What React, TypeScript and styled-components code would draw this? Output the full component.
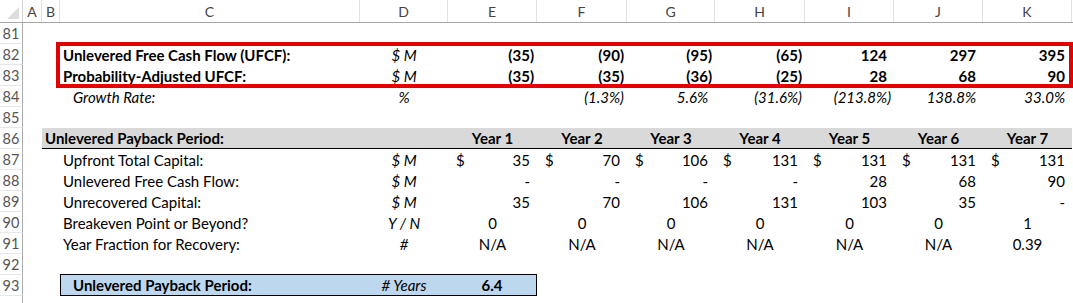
import React from 'react';
import styled, { createGlobalStyle } from 'styled-components';

const GlobalStyle = createGlobalStyle`
  html, body {
    margin: 0;
    padding: 0;
    background: #ffffff;
    overflow: hidden;
  }
  body {
    font-family: Lato, "Open Sans", sans-serif;
    font-size: 15px;
    color: #000;
  }
`;

// widths of the row header + columns A..K
const COLS = '23px 19px 18px 300px 88px 89px 90px 88px 90px 89px 89px 89px';
const BAND_COLS = '18px 300px 88px 89px 90px 88px 90px 89px 89px 89px';
const LETTERS = ['A', 'B', 'C', 'D', 'E', 'F', 'G', 'H', 'I', 'J', 'K'];
const YEARS = [1, 2, 3, 4, 5, 6, 7];

const Sheet = styled.div`
  width: 1073px;
  height: 303px;
  overflow: hidden;
`;

const HeaderRow = styled.div`
  display: grid;
  grid-template-columns: ${COLS};
  height: 22px;
  border-bottom: 1px solid #a6a6a6;
`;

const Corner = styled.div`
  position: relative;
  border-right: 1px solid #d4d4d4;
  &:after {
    content: '';
    position: absolute;
    right: 3px;
    bottom: 3px;
    border-style: solid;
    border-width: 0 0 12px 12px;
    border-color: transparent transparent #dcdcdc transparent;
  }
`;

const ColHead = styled.div`
  display: flex;
  align-items: center;
  justify-content: center;
  color: #444;
  font-size: 14px;
  border-right: 1px solid #e1e1e1;
`;

const Row = styled.div`
  display: grid;
  grid-template-columns: ${COLS};
  height: 21px;
`;

const RowNum = styled.div`
  display: flex;
  align-items: center;
  justify-content: center;
  color: #555;
  font-size: 14.5px;
  border-right: 1px solid #ababab;
  border-bottom: 1px solid #e6e6e6;
  box-sizing: border-box;
`;

const Cell = styled.div<{
  $align?: 'left' | 'right' | 'center';
  $bold?: boolean;
  $italic?: boolean;
  $indent?: number;
}>`
  display: flex;
  align-items: center;
  white-space: nowrap;
  overflow: visible;
  min-width: 0;
  padding: 0 3px;
  padding-left: ${p => (p.$indent ?? 3)}px;
  justify-content: ${p =>
    p.$align === 'right' ? 'flex-end' : p.$align === 'center' ? 'center' : 'flex-start'};
  font-weight: ${p => (p.$bold ? 700 : 400)};
  font-style: ${p => (p.$italic ? 'italic' : 'normal')};
`;

const Ghost = styled.span`
  visibility: hidden;
`;

const Acct = styled.div`
  display: flex;
  align-items: center;
  justify-content: space-between;
  padding: 0 3px 0 8px;
  white-space: nowrap;
`;

const Highlight = styled.div`
  position: relative;
  &:after {
    content: '';
    position: absolute;
    left: 56px;
    right: 0;
    top: -2px;
    bottom: -2px;
    border: 4px solid #e30000;
    pointer-events: none;
  }
`;

const Band = styled.div`
  grid-column: 3 / -1;
  display: grid;
  grid-template-columns: ${BAND_COLS};
  background: #d9d9d9;
  border-bottom: 1px solid #000;
  height: 21px;
  box-sizing: border-box;
`;

const PayBox = styled.div`
  grid-column: 4 / 7;
  display: grid;
  grid-template-columns: 299px 88px 88px;
  background: #bdd7ee;
  border: 1px solid #000;
  box-sizing: border-box;
  height: 22px;
  margin-top: -1px;
`;

// accounting number: negatives in parens, positives keep room for ")"
const num = (v: number | null) => {
  if (v === null) return <>-<Ghost>)</Ghost></>;
  if (v < 0) return <>({Math.abs(v)})</>;
  return <>{v}<Ghost>)</Ghost></>;
};

const pct = (v: string) =>
  v.startsWith('(') ? <>{v}</> : <>{v}<Ghost>)</Ghost></>;

const Empty = () => <Cell />;

interface IFlowRow {
  n: number;
  label: string;
  values: number[];
}

const FlowRow: React.FunctionComponent<IFlowRow> = ({ n, label, values }) => (
  <Row>
    <RowNum>{n}</RowNum>
    <Empty />
    <Empty />
    <Cell $bold>{label}</Cell>
    <Cell $align="center" $italic>$ M</Cell>
    {values.map((v, i) => (
      <Cell key={i} $align="right" $bold>
        {num(v)}
      </Cell>
    ))}
  </Row>
);

interface IDetailRow {
  n: number;
  label: string;
  unit: string;
  children: React.ReactNode;
}

const DetailRow: React.FunctionComponent<IDetailRow> = ({ n, label, unit, children }) => (
  <Row>
    <RowNum>{n}</RowNum>
    <Empty />
    <Empty />
    <Cell>{label}</Cell>
    <Cell $align="center" $italic>
      {unit}
    </Cell>
    {children}
  </Row>
);

const BlankRow: React.FunctionComponent<{ n?: number }> = ({ n }) => (
  <Row>
    <RowNum>{n}</RowNum>
  </Row>
);

const App = () => {
  const capital = [35, 70, 106, 131, 131, 131, 131];
  const ufcf: (number | null)[] = [null, null, null, null, 28, 68, 90];
  const unrecovered: (number | null)[] = [35, 70, 106, 131, 103, 35, null];
  const breakeven = ['0', '0', '0', '0', '0', '0', '1'];
  const fraction = ['N/A', 'N/A', 'N/A', 'N/A', 'N/A', 'N/A', '0.39'];
  const growth = ['', '(1.3%)', '5.6%', '(31.6%)', '(213.8%)', '138.8%', '33.0%'];

  return (
    <Sheet>
      <GlobalStyle />
      <HeaderRow>
        <Corner />
        {LETTERS.map(l => (
          <ColHead key={l}>{l}</ColHead>
        ))}
      </HeaderRow>

      <BlankRow n={81} />
      <Highlight>
        <FlowRow n={82} label="Unlevered Free Cash Flow (UFCF):" values={[-35, -90, -95, -65, 124, 297, 395]} />
        <FlowRow n={83} label="Probability-Adjusted UFCF:" values={[-35, -35, -36, -25, 28, 68, 90]} />
      </Highlight>

      <Row>
        <RowNum>84</RowNum>
        <Empty />
        <Empty />
        <Cell $italic $indent={13}>Growth Rate:</Cell>
        <Cell $align="center" $italic>%</Cell>
        {growth.map((g, i) => (
          <Cell key={i} $align="right" $italic>
            {g && pct(g)}
          </Cell>
        ))}
      </Row>

      <BlankRow n={85} />

      <Row>
        <RowNum>86</RowNum>
        <Empty />
        <Band>
          <Cell $bold>Unlevered Payback Period:</Cell>
          <Empty />
          <Empty />
          {YEARS.map(y => (
            <Cell key={y} $align="center" $bold>
              Year {y}
            </Cell>
          ))}
        </Band>
      </Row>

      <DetailRow n={87} label="Upfront Total Capital:" unit="$ M">
        {capital.map((v, i) => (
          <Acct key={i}>
            <span>$</span>
            <span>{num(v)}</span>
          </Acct>
        ))}
      </DetailRow>
      <DetailRow n={88} label="Unlevered Free Cash Flow:" unit="$ M">
        {ufcf.map((v, i) => (
          <Cell key={i} $align="right">
            {num(v)}
          </Cell>
        ))}
      </DetailRow>
      <DetailRow n={89} label="Unrecovered Capital:" unit="$ M">
        {unrecovered.map((v, i) => (
          <Cell key={i} $align="right">
            {num(v)}
          </Cell>
        ))}
      </DetailRow>
      <DetailRow n={90} label="Breakeven Point or Beyond?" unit="Y / N">
        {breakeven.map((v, i) => (
          <Cell key={i} $align="center">
            {v}
          </Cell>
        ))}
      </DetailRow>
      <DetailRow n={91} label="Year Fraction for Recovery:" unit="#">
        {fraction.map((v, i) => (
          <Cell key={i} $align="center">
            {v}
          </Cell>
        ))}
      </DetailRow>

      <BlankRow n={92} />

      <Row>
        <RowNum>93</RowNum>
        <Empty />
        <Empty />
        <PayBox>
          <Cell $bold $indent={12}>Unlevered Payback Period:</Cell>
          <Cell $align="center" $italic>
            # Years
          </Cell>
          <Cell $align="center" $bold>
            6.4
          </Cell>
        </PayBox>
      </Row>

      <BlankRow />
    </Sheet>
  );
};

export default App;
